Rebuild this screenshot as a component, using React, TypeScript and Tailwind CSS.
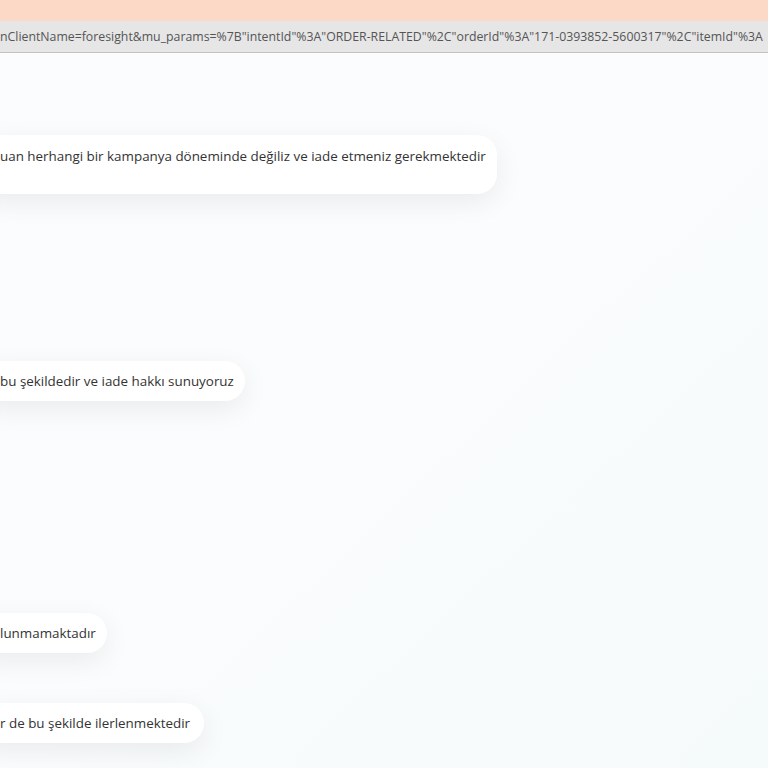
const url =
  'nClientName=foresight&mu_params=%7B"intentId"%3A"ORDER-RELATED"%2C"orderId"%3A"171-0393852-5600317"%2C"itemId"%3A';

type Bubble = { text: string; className: string };

const bubbles: Bubble[] = [
  {
    text: "uan herhangi bir kampanya döneminde değiliz ve iade etmeniz gerekmektedir",
    className: "mt-[82px] pt-[11px] pb-[28px]",
  },
  {
    text: "bu şekildedir ve iade hakkı sunuyoruz",
    className: "mt-[167px] py-[10px]",
  },
  {
    text: "lunmamaktadır",
    className: "mt-[212px] py-[10px]",
  },
  {
    text: "r de bu şekilde ilerlenmektedir",
    className: "mt-[50px] py-[10px] pr-[14px]",
  },
];

export default function App() {
  return (
    <div className="flex h-[768px] w-[768px] flex-col overflow-hidden bg-[#fafcfd] font-['Open_Sans',sans-serif]">
      {/* window title strip */}
      <div className="h-[21px] shrink-0 bg-[#fcd9c7]" />

      {/* address bar */}
      <div className="flex h-[32px] shrink-0 items-center overflow-hidden whitespace-nowrap border-b border-[#c2c2c2] bg-[#e6e6e6] pt-[2px] text-[12.3px] text-[#555]">
        <span>{url}</span>
      </div>

      {/* chat transcript */}
      <main className="flex flex-1 flex-col items-start bg-gradient-to-br from-[#fbfcfd] via-[#fafcfd] to-[#f5fafb]">
        {bubbles.map((b) => (
          <div
            key={b.text}
            className={`-ml-[24px] whitespace-nowrap rounded-[20px] bg-white pl-[24px] pr-[11px] text-[13.4px] leading-[20px] text-[#333] shadow-[0_8px_28px_rgba(0,0,0,0.07)] ${b.className}`}
          >
            {b.text}
          </div>
        ))}
      </main>
    </div>
  );
}
